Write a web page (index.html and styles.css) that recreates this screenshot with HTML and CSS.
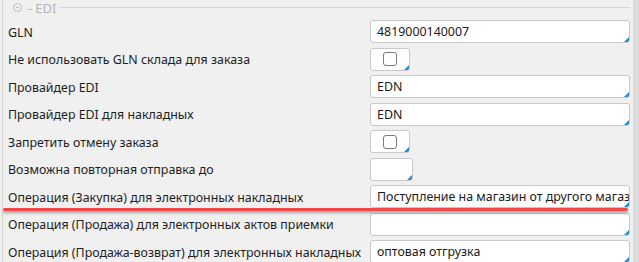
FILE: index.html
```html
<!DOCTYPE html>
<html lang="ru">
<head>
    <meta charset="utf-8">
    <title>EDI</title>
    <link rel="stylesheet" href="styles.css">
</head>
<body>

  <div id="page">
    <div class="group">
      <div class="legend">
        <span class="toggle"></span>
        <span class="dash">-</span>
        <span class="caption">EDI</span>
        <span class="rule"></span>
      </div>

      <div class="form">
        <div class="label">GLN</div>
        <div class="field"><div class="input wide">4819000140007</div></div>

        <div class="label">Не использовать GLN склада для заказа</div>
        <div class="field"><div class="input check"><span class="box"></span></div></div>

        <div class="label">Провайдер EDI</div>
        <div class="field"><div class="input wide">EDN</div></div>

        <div class="label">Провайдер EDI для накладных</div>
        <div class="field"><div class="input wide">EDN</div></div>

        <div class="label">Запретить отмену заказа</div>
        <div class="field"><div class="input check"><span class="box"></span></div></div>

        <div class="label">Возможна повторная отправка до</div>
        <div class="field"><div class="input date"></div></div>

        <div class="label">Операция (Закупка) для электронных накладных</div>
        <div class="field"><div class="input wide">Поступление на магазин от другого магазина</div></div>

        <div class="label">Операция (Продажа) для электронных актов приемки</div>
        <div class="field"><div class="input wide"></div></div>

        <div class="label">Операция (Продажа-возврат) для электронных накладных</div>
        <div class="field"><div class="input wide">оптовая отгрузка</div></div>
      </div>
    </div>
    <div class="gutter"></div>
  </div>

  <div id="mark"></div>

</body>
</html>
```

FILE: styles.css
```css
html {
    height: 100%;
}

body {
    margin: 0;
    padding: 0;
    background: #f0f0f0;
    color: #1e1e1e;
    font-family: "Noto Sans", sans-serif;
    font-size: 12.4px;
    height: 100%;
    overflow: hidden;
}

#page {
    display: flex;
    height: 100%;
}

.group {
    flex: 1;
    min-width: 0;
    margin-left: 2px;
    border-left: 1px solid #d6d6d6;
    padding: 0 3px 0 5px;
}

.gutter {
    width: 6px;
    background: #dcdcdc;
}

.legend {
    display: flex;
    align-items: center;
    height: 15px;
    color: #b4b4b4;
    font-size: 13px;
}

    .legend .toggle {
        box-sizing: border-box;
        width: 9px;
        height: 9px;
        border: 1px solid #bcbcbc;
        border-radius: 50%;
        margin-left: 5px;
        position: relative;
    }

    .legend .toggle:after {
        content: "";
        position: absolute;
        left: 2px;
        right: 2px;
        top: 3px;
        height: 1px;
        background: #bcbcbc;
    }

    .legend .dash {
        margin: 0 3px 0 6px;
    }

    .legend .rule {
        flex: 1;
        height: 1px;
        background: #d6d6d6;
        margin-left: 4px;
    }

.form {
    display: grid;
    grid-template-columns: 362px minmax(0, 1fr);
    grid-auto-rows: 23px;
    row-gap: 4.5px;
    margin-top: 5px;
}

.label {
    display: flex;
    align-items: center;
    white-space: nowrap;
    overflow: hidden;
    padding-top: 1px;
}

.field {
    display: flex;
    min-width: 0;
}

.input {
    position: relative;
    box-sizing: border-box;
    min-width: 0;
    height: 23px;
    background: #fff;
    border: 1px solid #c9c9c9;
    border-radius: 3px;
    padding: 0 6px;
    line-height: 22px;
    white-space: nowrap;
    overflow: hidden;
    color: #1a1a1a;
}

    .input:after {
        content: "";
        position: absolute;
        right: 0;
        bottom: 0;
        border-style: solid;
        border-width: 0 0 5px 5px;
        border-color: transparent transparent #1f8ad2 transparent;
    }

.wide {
    flex: 1;
}

.check {
    width: 40px;
    display: flex;
    align-items: center;
    justify-content: center;
    padding: 0;
}

    .check .box {
        width: 12px;
        height: 12px;
        border: 1px solid #7a7a7a;
        border-radius: 3px;
    }

.date {
    width: 43px;
}

#mark {
    position: absolute;
    left: 3px;
    top: 208px;
    width: 625px;
    height: 3px;
    border-radius: 2px;
    background: #f24848;
    box-shadow: 0 2px 3px rgba(0,0,0,0.35);
}
```
